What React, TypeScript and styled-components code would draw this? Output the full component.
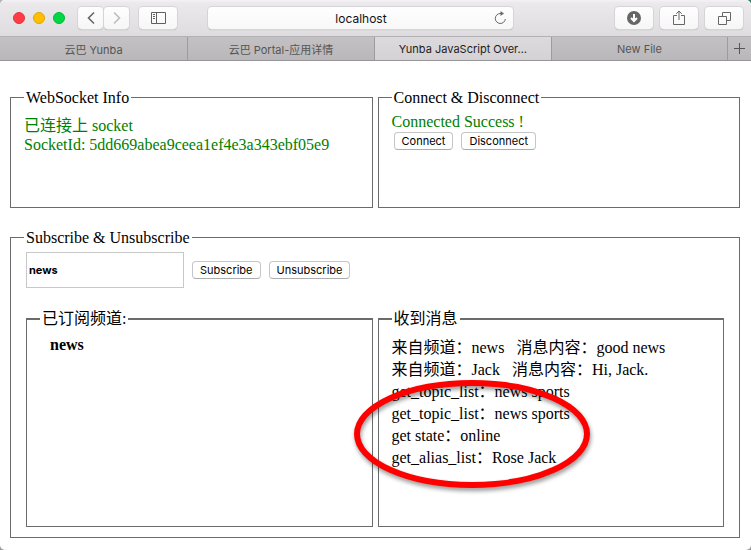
import React from "react";
import styled, { createGlobalStyle } from "styled-components";

const uiFont = `Inter, "Noto Sans CJK SC", sans-serif`;
const pageFont = `"Liberation Serif", "Noto Sans CJK SC", serif`;
const line = "#6b6b6b";

const GlobalStyle = createGlobalStyle`
  * { box-sizing: border-box; }
  body { margin: 0; background: #8d8f8f; }
`;

const Desktop = styled.div`
  background: linear-gradient(90deg, #b5b5b5 50%, #2f7d68 50%) top / 100% 30px no-repeat, #9a9a9a;
`;

const Window = styled.div`
  display: flex;
  flex-direction: column;
  min-height: 100vh;
  overflow: hidden;
  border-radius: 5px;
  background: #fff;
`;

const Toolbar = styled.header`
  display: flex;
  align-items: center;
  height: 37px;
  padding: 0 8px 0 13px;
  background: linear-gradient(#f4f2f4, #ebe9eb 3px, #dedcde);
  border-bottom: 1px solid #b3b1b3;
`;

const Lights = styled.div`
  display: flex;
  gap: 8px;
  margin-right: 13px;
`;

const Light = styled.button<{ $fill: string; $edge: string }>`
  width: 12px;
  height: 12px;
  padding: 0;
  border: 1px solid ${(p) => p.$edge};
  border-radius: 50%;
  background: ${(p) => p.$fill};
`;

const Group = styled.div<{ $gap: number }>`
  display: flex;
  gap: ${(p) => p.$gap}px;
`;

const ToolButton = styled.button<{ $narrow?: boolean }>`
  display: flex;
  align-items: center;
  justify-content: center;
  width: ${(p) => (p.$narrow ? 25 : 38)}px;
  height: 22px;
  padding: 0;
  border: 0;
  border-radius: 4px;
  background: linear-gradient(#fefefe, #f6f6f6);
  box-shadow: 0 0 0 1px #d6d4d6, 0 1px 1px #a9a7a9;
`;

const SidebarSlot = styled.div`
  margin: 0 31px 0 10px;
`;

const Address = styled.form`
  display: flex;
  align-items: center;
  flex: 1;
  min-width: 0;
  height: 22px;
  margin-right: 102px;
  padding: 0 6px 0 20px;
  border-radius: 4px;
  background: linear-gradient(#fefefe, #f8f8f8);
  box-shadow: 0 0 0 1px #d6d4d6, 0 1px 1px #a9a7a9;
`;

const AddressInput = styled.input`
  flex: 1;
  min-width: 0;
  padding: 0;
  border: 0;
  outline: 0;
  background: transparent;
  text-align: center;
  font: 12px ${uiFont};
  color: #111;
`;

const Reload = styled.button`
  display: flex;
  padding: 0;
  border: 0;
  background: transparent;
`;

const Tabs = styled.nav`
  display: flex;
  height: 24px;
  border-bottom: 1px solid #979597;
  background: linear-gradient(#c3c1c3, #b9b7b9);
`;

const Tab = styled.button<{ $active?: boolean; $grow: number }>`
  flex: ${(p) => p.$grow} 1 0;
  min-width: 0;
  padding: 0;
  border: 0;
  border-right: 1px solid #9d9b9d;
  background: ${(p) => (p.$active ? "linear-gradient(#dcdadc, #d4d2d4)" : "transparent")};
  color: ${(p) => (p.$active ? "#1c1c1c" : "#555")};
  font: 11px ${uiFont};
  white-space: nowrap;
`;

const AddTab = styled.button`
  display: flex;
  align-items: center;
  justify-content: center;
  width: 23px;
  padding: 0;
  border: 0;
  background: transparent;
`;

const Page = styled.main`
  padding: 28px 11px 11px 10px;
  font: 16px/18px ${pageFont};
  color: #000;
`;

const Columns = styled.div`
  display: grid;
  grid-template-columns: minmax(0, 1fr) minmax(0, 1fr);
  gap: 5px;
`;

const Panel = styled.fieldset<{ $height: number; $heavyTop?: boolean }>`
  position: relative;
  min-width: 0;
  min-height: ${(p) => p.$height}px;
  margin: 0;
  padding: 7px 12px 10px 13px;
  border: 1px solid ${line};
  border-top-width: ${(p) => (p.$heavyTop ? 2 : 1)}px;
`;

const Title = styled.legend`
  height: 17px;
  padding: 0 2px;
`;

const SubscribePanel = styled(Panel)`
  margin-top: 21px;
  padding: 6px 15px 10px;
  & > ${Title} {
    margin-left: -2px;
  }
`;

const Status = styled.div`
  color: #008000;
`;

const SocketStatus = styled(Status)`
  padding-top: 3px;
  line-height: 19px;
`;

const Buttons = styled.div`
  display: flex;
  align-items: center;
  gap: 8px;
  padding: 1px 2px;
`;

const PushButton = styled.button`
  height: 18px;
  padding: 0 7px;
  border: 1px solid #c6c6c6;
  border-bottom-color: #adadad;
  border-radius: 4px;
  background: #fff;
  color: #000;
  font: 11px/14px ${uiFont};
`;

const TopicForm = styled.form`
  display: flex;
  align-items: center;
  gap: 8px;
  margin-bottom: 22px;
`;

const TopicInput = styled.input`
  width: 158px;
  height: 36px;
  padding: 2px;
  border: 1px solid #c8c8c8;
  background: #fff;
  color: #000;
  font: bold 11px ${uiFont};
`;

const TopicList = styled.ul`
  margin: 0;
  padding: 2px 0 0 10px;
  list-style: none;
  font-weight: bold;
`;

const Messages = styled.ul`
  margin: 0;
  padding: 3px 0 0;
  list-style: none;
  line-height: 22px;
  white-space: pre;
`;

const Highlight = styled.svg`
  position: absolute;
  left: -30px;
  top: 45px;
  overflow: visible;
  filter: drop-shadow(1px 3px 2px rgba(0, 0, 0, 0.4));
  pointer-events: none;
`;

const messages = [
  "来自频道：news   消息内容：good news",
  "来自频道：Jack   消息内容：Hi, Jack.",
  "get_topic_list：news sports",
  "get_topic_list：news sports",
  "get state：online",
  "get_alias_list：Rose Jack",
];

const Chevron = ({ d, color }: { d: string; color: string }) => (
  <svg width="8" height="14" viewBox="0 0 8 14" fill="none" stroke={color} strokeWidth="1.6">
    <path d={d} />
  </svg>
);

export default function App() {
  return (
    <Desktop>
      <GlobalStyle />
      <Window>
        <Toolbar>
          <Lights>
            <Light aria-label="Close" $fill="#ff3b47" $edge="#e2343f" />
            <Light aria-label="Minimize" $fill="#ffbe00" $edge="#e3a500" />
            <Light aria-label="Zoom" $fill="#00d742" $edge="#00b934" />
          </Lights>
          <Group $gap={1}>
            <ToolButton $narrow aria-label="Back">
              <Chevron d="M7 1.5 1.5 7l5.5 5.5" color="#666" />
            </ToolButton>
            <ToolButton $narrow aria-label="Forward">
              <Chevron d="M1 1.5 6.5 7l-5.5 5.5" color="#bcbcbc" />
            </ToolButton>
          </Group>
          <SidebarSlot>
            <ToolButton aria-label="Sidebar">
              <svg width="15" height="12" viewBox="0 0 15 12" fill="none" stroke="#606060">
                <path d="M.5.5h14v11H.5zM5.5.5v11M2 2.5h2M2 4.5h2M2 6.5h2" />
              </svg>
            </ToolButton>
          </SidebarSlot>
          <Address onSubmit={(e) => e.preventDefault()}>
            <AddressInput aria-label="Address" defaultValue="localhost" />
            <Reload type="button" aria-label="Reload">
              <svg width="13" height="14" viewBox="0 0 13 14" fill="none" stroke="#686868">
                <path d="M7 2.5H6A5 5 0 1 0 11.3 8" />
                <path d="M6.5 0 10 2.5 6.5 5z" fill="#686868" stroke="none" />
              </svg>
            </Reload>
          </Address>
          <Group $gap={7}>
            <ToolButton aria-label="Downloads">
              <svg width="14" height="14" viewBox="0 0 14 14">
                <circle cx="7" cy="7" r="7" fill="#666" />
                <path d="M7 3v6M4 7l3 3 3-3" fill="none" stroke="#fff" strokeWidth="2" />
              </svg>
            </ToolButton>
            <ToolButton aria-label="Share">
              <svg width="12" height="16" viewBox="0 0 12 16" fill="none" stroke="#666">
                <path d="M4 5.5H.5v9h11v-9H8M6 10V1M3.2 3.8 6 1l2.8 2.8" />
              </svg>
            </ToolButton>
            <ToolButton aria-label="Show all tabs">
              <svg width="13" height="13" viewBox="0 0 13 13" fill="none" stroke="#666">
                <path d="M.5 4.5h8v8h-8zM4.5 4.5v-4h8v8h-4" />
              </svg>
            </ToolButton>
          </Group>
        </Toolbar>
        <Tabs>
          <Tab $grow={188}>云巴 Yunba</Tab>
          <Tab $grow={187}>云巴 Portal-应用详情</Tab>
          <Tab $grow={177} $active>Yunba JavaScript Over…</Tab>
          <Tab $grow={176}>New File</Tab>
          <AddTab aria-label="New tab">
            <svg width="11" height="11" viewBox="0 0 11 11" stroke="#555">
              <path d="M5.5 0v11M0 5.5h11" />
            </svg>
          </AddTab>
        </Tabs>
        <Page>
          <Columns>
            <Panel $height={119}>
              <Title>WebSocket Info</Title>
              <SocketStatus>
                已连接上 socket
                <br />
                SocketId: 5dd669abea9ceea1ef4e3a343ebf05e9
              </SocketStatus>
            </Panel>
            <Panel $height={119}>
              <Title>Connect &amp; Disconnect</Title>
              <Status>Connected Success !</Status>
              <Buttons>
                <PushButton>Connect</PushButton>
                <PushButton>Disconnect</PushButton>
              </Buttons>
            </Panel>
          </Columns>
          <SubscribePanel $height={309}>
            <Title>Subscribe &amp; Unsubscribe</Title>
            <TopicForm onSubmit={(e) => e.preventDefault()}>
              <TopicInput aria-label="Topic" defaultValue="news" />
              <PushButton type="submit">Subscribe</PushButton>
              <PushButton type="button">Unsubscribe</PushButton>
            </TopicForm>
            <Columns>
              <Panel $height={217} $heavyTop>
                <Title>已订阅频道:</Title>
                <TopicList>
                  <li>news</li>
                </TopicList>
              </Panel>
              <Panel $height={217} $heavyTop>
                <Title>收到消息</Title>
                <Messages>
                  {messages.map((text, i) => (
                    <li key={i}>{text}</li>
                  ))}
                </Messages>
                <Highlight width="248" height="120" viewBox="0 0 248 120" fill="none" stroke="#f00" strokeWidth="6">
                  <ellipse cx="123" cy="62" rx="115" ry="51" />
                </Highlight>
              </Panel>
            </Columns>
          </SubscribePanel>
        </Page>
      </Window>
    </Desktop>
  );
}
